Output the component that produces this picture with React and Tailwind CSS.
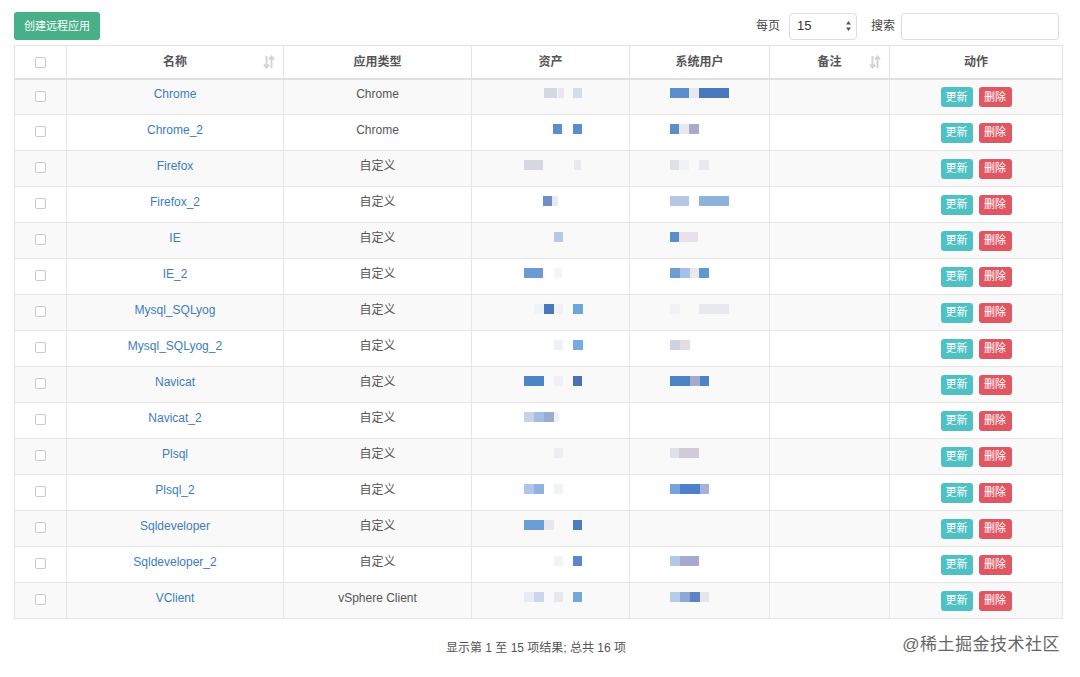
import React from 'react';

const B = '#5b8dcb'; // blue block
const D = '#4a78bd'; // dark blue
const F = '#e7e9ef'; // faint
const P = '#a9aacb'; // purple-ish

// blurred mosaic blocks: [x, width, color] relative to the cell's left edge
const rows = [
	{ name: 'Chrome', type: 'Chrome', asset: [[72, 13, '#d5d8e0'], [86, 6, F], [101, 9, '#cfdff0']], user: [[40, 19, B], [59, 10, F], [69, 30, D]] },
	{ name: 'Chrome_2', type: 'Chrome', asset: [[81, 9, B], [101, 9, B]], user: [[40, 9, B], [49, 10, F], [59, 10, P]] },
	{ name: 'Firefox', type: '自定义', asset: [[52, 19, '#d5d8e0'], [102, 7, F]], user: [[40, 9, '#dfe1e7'], [49, 10, '#f1f2f5'], [69, 10, F]] },
	{ name: 'Firefox_2', type: '自定义', asset: [[71, 9, '#6e8ec8'], [80, 6, F]], user: [[40, 19, '#b5c7e2'], [69, 30, '#8fb2dd']] },
	{ name: 'IE', type: '自定义', asset: [[82, 9, '#b9c8e6']], user: [[40, 9, B], [49, 19, '#e6e1ea']] },
	{ name: 'IE_2', type: '自定义', asset: [[52, 19, '#6b9bd0'], [82, 8, '#f3f5f8']], user: [[40, 10, '#6f9dd0'], [50, 10, '#a7c0e6'], [60, 9, F], [69, 10, '#5c98d6']] },
	{ name: 'Mysql_SQLyog', type: '自定义', asset: [[62, 10, '#f0f3f7'], [72, 10, D], [82, 9, '#eef1f5'], [101, 10, '#6ea6d8']], user: [[40, 10, '#f1f2f5'], [69, 30, '#e8e9ee']] },
	{ name: 'Mysql_SQLyog_2', type: '自定义', asset: [[82, 9, '#eef1f6'], [101, 10, '#74aee0']], user: [[40, 10, '#cfd2e1'], [50, 10, '#e4dde4']] },
	{ name: 'Navicat', type: '自定义', asset: [[52, 20, '#4b84c7'], [82, 9, '#eef1f5'], [101, 9, '#4d6fb8']], user: [[40, 20, '#4a84c6'], [60, 10, P], [70, 9, '#4a84c6']] },
	{ name: 'Navicat_2', type: '自定义', asset: [[52, 10, '#c6d3e6'], [62, 10, '#a7bde0'], [72, 10, '#9aacd0'], [82, 5, '#eef1f6']], user: [] },
	{ name: 'Plsql', type: '自定义', asset: [[82, 9, '#eceef2']], user: [[40, 9, '#dfe0ea'], [49, 20, '#d2ccda']] },
	{ name: 'Plsql_2', type: '自定义', asset: [[52, 10, '#b1c6e6'], [62, 10, '#8fb3de'], [82, 9, '#eef4f8']], user: [[40, 10, '#76a6d9'], [50, 20, '#4f7fc4'], [70, 9, '#a7b0d8']] },
	{ name: 'Sqldeveloper', type: '自定义', asset: [[52, 20, '#6a9dd2'], [72, 10, '#e5e7ed'], [101, 9, '#4b7ec0']], user: [] },
	{ name: 'Sqldeveloper_2', type: '自定义', asset: [[82, 9, '#eef4f8'], [101, 9, '#5a86cc']], user: [[40, 10, '#b1c8e8'], [50, 19, '#a7aacf']] },
	{ name: 'VClient', type: 'vSphere Client', asset: [[52, 10, '#e5ecf4'], [62, 10, '#cbd6ea'], [82, 9, '#e6e8ee'], [101, 9, '#75a7da']], user: [[40, 10, '#b6cde8'], [50, 10, '#8ea7d3'], [60, 10, '#5f82c4'], [70, 9, '#e5e7ed']] },
];

const Mosaic = ({ blocks, w }) => (
	<svg width={w} height="12" className="block">
		{blocks.map((b, i) => (
			<rect key={i} x={b[0]} y="1" width={b[1]} height="10" fill={b[2]} />
		))}
	</svg>
);

const SortIcon = () => (
	<svg width="12" height="14" viewBox="0 0 12 14" className="absolute right-2 top-1/2 -translate-y-1/2">
		<g stroke="#d4d4d4" strokeWidth="2" fill="none">
			<path d="M3.5 1 V12" />
			<path d="M1 9.5 L3.5 12.5 L6 9.5" />
			<path d="M8.5 13 V2" />
			<path d="M6 4.5 L8.5 1.5 L11 4.5" />
		</g>
	</svg>
);

const Checkbox = () => (
	<span className="inline-block w-[11px] h-[11px] rounded-[2px] border border-[#c9c9c9] bg-white align-middle" />
);

const App = () => {
	const font = { fontFamily: '"Liberation Sans", "Noto Sans CJK SC", sans-serif' };
	return (
		<div className="w-[1080px] h-[677px] bg-white relative overflow-hidden text-[#333]" style={font}>
			{/* toolbar */}
			<div className="flex items-center justify-between pl-[14px] pr-[21px] pt-[12px] h-[40px]">
				<button className="h-[28px] w-[86px] rounded-[3px] bg-[#48b089] text-white text-[11px]">创建远程应用</button>
				<div className="flex items-center text-[12px] text-[#444]">
					<span className="mr-[9px]">每页</span>
					<div className="w-[68px] h-[27px] border border-[#ddd] rounded-[4px] flex items-center justify-between pl-[7px] pr-[4px] text-[13px] text-[#333]">
						<span>15</span>
						<svg width="7" height="12" viewBox="0 0 7 12">
							<path d="M3.5 1 L6 4.5 H1 Z M3.5 11 L6 7.5 H1 Z" fill="#555" />
						</svg>
					</div>
					<span className="ml-[14px] mr-[6px]">搜索</span>
					<div className="w-[158px] h-[27px] border border-[#ddd] rounded-[3px]" />
				</div>
			</div>

			{/* table */}
			<div className="ml-[14px] mt-[5px] w-[1048px]">
				<table className="w-full table-fixed border-collapse text-[12px]">
					<colgroup>
						<col className="w-[52px]" />
						<col className="w-[217px]" />
						<col className="w-[188px]" />
						<col className="w-[158px]" />
						<col className="w-[140px]" />
						<col className="w-[120px]" />
						<col className="w-[173px]" />
					</colgroup>
					<thead>
						<tr className="h-[33px]">
							<th className="border border-[#e3e3e3] border-b-2 border-b-[#e0e0e0]"><Checkbox /></th>
							<th className="relative border border-[#e3e3e3] border-b-2 border-b-[#e0e0e0] font-bold text-[#555]">名称<SortIcon /></th>
							<th className="border border-[#e3e3e3] border-b-2 border-b-[#e0e0e0] font-bold text-[#555]">应用类型</th>
							<th className="border border-[#e3e3e3] border-b-2 border-b-[#e0e0e0] font-bold text-[#555]">资产</th>
							<th className="border border-[#e3e3e3] border-b-2 border-b-[#e0e0e0] font-bold text-[#555]">系统用户</th>
							<th className="relative border border-[#e3e3e3] border-b-2 border-b-[#e0e0e0] font-bold text-[#555]">备注<SortIcon /></th>
							<th className="border border-[#e3e3e3] border-b-2 border-b-[#e0e0e0] font-bold text-[#555]">动作</th>
						</tr>
					</thead>
					<tbody>
						{rows.map((r, i) => (
							<tr key={r.name} className={i % 2 === 0 ? 'h-[36px] bg-[#f9f9f9]' : 'h-[36px] bg-white'}>
								<td className="border border-[#e6e6e6] text-center pb-[3px]"><Checkbox /></td>
								<td className="border border-[#e6e6e6] text-center text-[#3d7cc2] pb-[5px]">{r.name}</td>
								<td className="border border-[#e6e6e6] text-center text-[#555] pb-[5px]">{r.type}</td>
								<td className="border border-[#e6e6e6] pb-[7px]"><Mosaic blocks={r.asset} w={157} /></td>
								<td className="border border-[#e6e6e6] pb-[7px]"><Mosaic blocks={r.user} w={139} /></td>
								<td className="border border-[#e6e6e6]" />
								<td className="border border-[#e6e6e6] text-center">
									<div className="flex items-center justify-center gap-[6px]">
										<button className="h-[20px] w-[32px] rounded-[3px] bg-[#4fc0c4] text-white text-[11px]">更新</button>
										<button className="h-[20px] w-[33px] rounded-[3px] bg-[#e05663] text-white text-[11px]">删除</button>
									</div>
								</td>
							</tr>
						))}
					</tbody>
				</table>
			</div>

			{/* footer */}
			<div className="pt-[20px] w-[1048px] ml-[14px] text-center text-[12px] text-[#555] pr-[4px]">显示第 1 至 15 项结果; 总共 16 项</div>
			<div className="absolute right-[20px] bottom-[20px] text-[17px] text-[#666] tracking-[0.5px]">@稀土掘金技术社区</div>
		</div>
	);
};

export default App;
